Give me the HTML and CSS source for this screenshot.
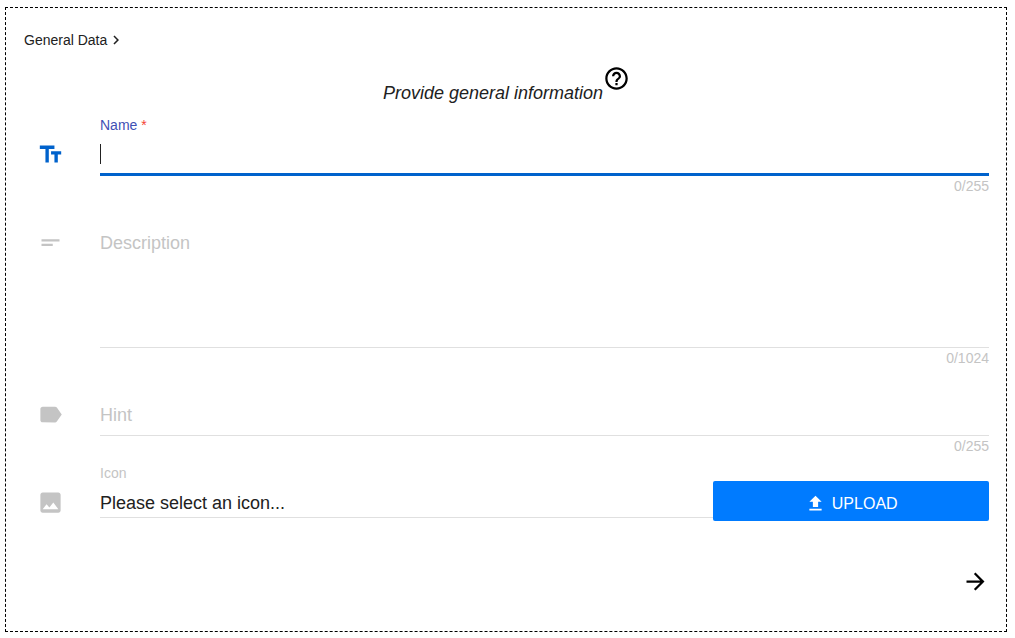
FILE: index.html
```html
<!DOCTYPE html>
<html lang="en">
<head>
<meta charset="utf-8">
<meta name="viewport" content="width=device-width, initial-scale=1">
<title>General Data</title>
<link rel="stylesheet" href="styles.css">
</head>
<body>
<main class="panel">
  <nav class="breadcrumb" aria-label="Steps">
    <a class="crumb" href="#general">General Data</a>
    <svg class="crumb-icon" viewBox="0 0 24 24" aria-hidden="true"><path d="M10 6 8.590 7.410 13.170 12l-4.580 4.590L10 18l6-6z"/></svg>
  </nav>

  <header class="heading">
    <h1 class="title">Provide general information</h1>
    <button class="icon-button" type="button" aria-label="Help">
      <svg class="icon" viewBox="0 0 24 24" aria-hidden="true"><path d="M11 18h2v-2h-2v2zm1-16C6.480 2 2 6.480 2 12s4.480 10 10 10 10-4.480 10-10S17.520 2 12 2zm0 18c-4.410 0-8-3.590-8-8s3.590-8 8-8 8 3.590 8 8-3.590 8-8 8zm0-14c-2.210 0-4 1.790-4 4h2c0-1.100.9-2 2-2s2 .9 2 2c0 2-3 1.750-3 5h2c0-2.250 3-2.500 3-5 0-2.210-1.790-4-4-4z"/></svg>
    </button>
  </header>

  <form class="form">
    <div class="row">
      <svg class="icon row-icon active" viewBox="0 0 24 24" aria-hidden="true"><path d="M2.500 4v3h5v12h3V7h5V4h-13zm19 5h-9v3h3v7h3v-7h3V9z"/></svg>
      <div class="field">
        <label class="label label-active" for="name">Name <span class="required">*</span></label>
        <input class="control control-active" id="name" type="text" maxlength="255" required>
        <div class="counter">0/255</div>
      </div>
    </div>

    <div class="row">
      <svg class="icon row-icon" viewBox="0 0 24 24" aria-hidden="true"><path d="M4 9h16v2H4zm0 4h10v2H4z"/></svg>
      <div class="field unlabelled">
        <textarea class="control control-tall" aria-label="Description" placeholder="Description" maxlength="1024"></textarea>
        <div class="counter">0/1024</div>
      </div>
    </div>

    <div class="row">
      <svg class="icon row-icon" viewBox="0 0 24 24" aria-hidden="true"><path d="M17.630 5.840C17.270 5.330 16.670 5 16 5L5 5.010C3.900 5.010 3 5.900 3 7v10c0 1.100.9 1.990 2 1.990L16 19c.67 0 1.270-.33 1.630-.84L22 12l-4.370-6.160z"/></svg>
      <div class="field unlabelled">
        <input class="control" type="text" aria-label="Hint" placeholder="Hint" maxlength="255">
        <div class="counter">0/255</div>
      </div>
    </div>

    <div class="row">
      <svg class="icon row-icon" viewBox="0 0 24 24" aria-hidden="true"><path d="M21 19V5c0-1.100-.9-2-2-2H5c-1.100 0-2 .9-2 2v14c0 1.100.9 2 2 2h14c1.100 0 2-.9 2-2zM8.500 13.500l2.500 3.010L14.500 12l4.500 6H5l3.500-4.500z"/></svg>
      <div class="field">
        <label class="label" for="icon">Icon</label>
        <div class="picker">
          <select class="control control-select" id="icon"><option>Please select an icon...</option></select>
          <button class="upload" type="button">
            <svg class="upload-icon" viewBox="0 0 24 24" aria-hidden="true"><path d="M9 16h6v-6h4l-7-7-7 7h4zm-4 2h14v2H5z"/></svg>
            UPLOAD
          </button>
        </div>
      </div>
    </div>

    <div class="actions">
      <button class="icon-button" type="button" aria-label="Next">
        <svg class="icon" viewBox="0 0 24 24" aria-hidden="true"><path d="M12 4l-1.410 1.410L16.170 11H4v2h12.170l-5.580 5.590L12 20l8-8z"/></svg>
      </button>
    </div>
  </form>
</main>
</body>
</html>
```
FILE: styles.css
```css
* {
  box-sizing: border-box;
}

body {
  margin: 7px 8px 6px 5px;
  background: #fff;
  color: #212121;
  font: 18px/22px "Liberation Sans", Arial, sans-serif;
}

svg {
  display: block;
  fill: currentColor;
}

button,
input,
select,
textarea {
  font: inherit;
}

.panel {
  border: 1px dashed #000;
  padding: 22px 17px 36px 18px;
}

.breadcrumb {
  display: flex;
  align-items: center;
  font-size: 14px;
  line-height: 20px;
}

.crumb {
  color: inherit;
  text-decoration: none;
}

.crumb-icon {
  width: 18px;
  height: 18px;
}

.heading {
  display: flex;
  justify-content: center;
  align-items: flex-start;
  margin: 15px 0 13px;
}

.title {
  margin: 0;
  padding-top: 17px;
  font-size: 18px;
  font-style: italic;
  font-weight: 400;
}

.icon {
  width: 27px;
  height: 27px;
}

.icon-button {
  padding: 0;
  border: 0;
  background: none;
  color: #000;
}

.form {
  display: flex;
  flex-direction: column;
  gap: 11px;
}

.row {
  display: grid;
  grid-template-columns: 53px 1fr;
  column-gap: 23px;
}

.row-icon {
  justify-self: center;
  margin-top: 24px;
  color: #c4c4c4;
}

.row-icon.active {
  color: #0062cc;
}

.field {
  min-width: 0;
}

.unlabelled {
  padding-top: 16px;
}

.label {
  display: block;
  color: #c4c4c4;
  font-size: 14px;
  line-height: 16px;
}

.label-active {
  color: #3f51b5;
}

.required {
  color: #f44336;
}

.control {
  display: block;
  width: 100%;
  height: 43px;
  padding: 11px 0 9px;
  border: 0;
  border-bottom: 1px solid #e0e0e0;
  border-radius: 0;
  outline: 0;
  background: none;
  color: inherit;
  line-height: 22px;
}

.control::placeholder {
  color: #c4c4c4;
  opacity: 1;
}

.control-active {
  border-bottom: 3px solid #0062cc;
  background: linear-gradient(#212121, #212121) 0 11px / 1px 20px no-repeat;
  caret-color: transparent;
}

.control-tall {
  height: 127px;
  resize: none;
}

.control-select {
  flex: 1;
  height: 37px;
  padding: 11px 0 3px;
  appearance: none;
}

.counter {
  margin-top: 2px;
  color: #c4c4c4;
  font-size: 14px;
  line-height: 16px;
  text-align: right;
}

.picker {
  display: flex;
  align-items: flex-start;
}

.upload {
  display: flex;
  flex: 0 0 31%;
  justify-content: center;
  align-items: center;
  gap: 6px;
  height: 40px;
  padding: 5px 0 0;
  border: 0;
  border-radius: 2px;
  background: #007bff;
  color: #fff;
  font-size: 16px;
}

.upload-icon {
  width: 21px;
  height: 21px;
}

.actions {
  display: flex;
  justify-content: flex-end;
  margin-top: 36px;
}
```
